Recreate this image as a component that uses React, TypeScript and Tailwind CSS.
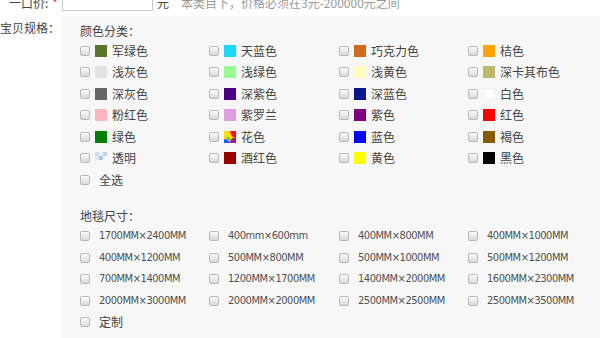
import React from 'react';

type Swatch = { name: string; color?: string; kind?: 'flower' | 'clear' | 'white' };

const colors: Swatch[] = [
  { name: '军绿色', color: '#5b752b' },
  { name: '天蓝色', color: '#1ed6f6' },
  { name: '巧克力色', color: '#d2691e' },
  { name: '桔色', color: '#ffa500' },
  { name: '浅灰色', color: '#e3e3e3' },
  { name: '浅绿色', color: '#98fb98' },
  { name: '浅黄色', color: '#ffffbf' },
  { name: '深卡其布色', color: '#bdb76b' },
  { name: '深灰色', color: '#666666' },
  { name: '深紫色', color: '#4b0082' },
  { name: '深蓝色', color: '#08188c' },
  { name: '白色', kind: 'white' },
  { name: '粉红色', color: '#ffb6c1' },
  { name: '紫罗兰', color: '#dda0dd' },
  { name: '紫色', color: '#800080' },
  { name: '红色', color: '#ff0000' },
  { name: '绿色', color: '#008000' },
  { name: '花色', kind: 'flower' },
  { name: '蓝色', color: '#0000ff' },
  { name: '褐色', color: '#855b00' },
  { name: '透明', kind: 'clear' },
  { name: '酒红色', color: '#990000' },
  { name: '黄色', color: '#ffff00' },
  { name: '黑色', color: '#000000' },
];

const sizes = [
  '1700MM×2400MM',
  '400mm×600mm',
  '400MM×800MM',
  '400MM×1000MM',
  '400MM×1200MM',
  '500MM×800MM',
  '500MM×1000MM',
  '500MM×1200MM',
  '700MM×1400MM',
  '1200MM×1700MM',
  '1400MM×2000MM',
  '1600MM×2300MM',
  '2000MM×3000MM',
  '2000MM×2000MM',
  '2500MM×2500MM',
  '2500MM×3500MM',
];

const Checkbox = () => (
  <span className="block w-[10px] h-[10px] shrink-0 rounded-[2px] border border-[#b9b9b9] bg-linear-to-b from-[#fbfbfb] to-[#d9d9d9]" />
);

const SwatchBox = ({ s }: { s: Swatch }) => {
  if (s.kind === 'flower') {
    return (
      <svg width="12" height="12" viewBox="0 0 12 12" className="shrink-0">
        <rect width="12" height="12" fill="#ffe000" />
        <path d="M6 0h6v7C9 7 7 5 6 0z" fill="#ff1010" />
        <path d="M0 8c3 0 5 1 6 4H0z" fill="#1a5cff" />
        <path d="M6 12c0-3 1-4 3-5h3v5z" fill="#9a1ea0" />
        <path d="M3 6c2 0 3 1 3 3-2 0-3-1-3-3z" fill="#22c04a" />
      </svg>
    );
  }
  if (s.kind === 'clear') {
    return (
      <svg width="12" height="12" viewBox="0 0 12 12" className="shrink-0">
        <rect width="12" height="12" fill="#f4f7fc" />
        <rect x="0" y="0" width="4" height="4" fill="#cfdcf2" />
        <rect x="4" y="0" width="4" height="4" fill="#e6edf8" />
        <rect x="8" y="0" width="4" height="4" fill="#bfd1ee" />
        <rect x="4" y="4" width="4" height="4" fill="#aec4e9" />
        <rect x="0" y="4" width="4" height="4" fill="#e0e8f6" />
      </svg>
    );
  }
  if (s.kind === 'white') {
    return <span className="block w-[12px] h-[12px] shrink-0 bg-white border border-[#eeeeee]" />;
  }
  return <span className="block w-[12px] h-[12px] shrink-0" style={{ backgroundColor: s.color }} />;
};

export default function App() {
  return (
    <div className="w-[600px] h-[338px] overflow-hidden bg-white text-[12px] text-[#444] font-['Noto_Sans_CJK_SC',sans-serif]">
      <div className="-mt-[13px]">
        {/* 一口价 */}
        <div className="flex items-start h-[24px] leading-[16px]">
          <div className="w-[62px] shrink-0 pl-[9px] mt-[8px]">
            一口价:<span className="ml-[4px] text-[#e4393c]">*</span>
          </div>
          <div className="w-[91px] h-[24px] shrink-0 border border-[#c8c8c8] bg-white" />
          <span className="ml-[4px] mt-[8px]">元</span>
          <span className="ml-[12px] mt-[8px] text-[#9a9a9a]">本类目下，价格必须在3元-200000元之间</span>
        </div>

        {/* 宝贝规格 */}
        <div className="flex mt-[5px]">
          <div className="w-[62px] shrink-0 pt-[3px] leading-[18px] whitespace-nowrap">宝贝规格：</div>
          <div className="flex-1 bg-[#f7f7f7] pl-[18px] pt-[6px] h-[360px]">
            <div className="leading-[18px]">颜色分类：</div>
            <div className="grid grid-cols-[129px_130px_129px_129px]">
              {colors.map((c) => (
                <div key={c.name} className="flex items-center h-[21.5px] whitespace-nowrap">
                  <Checkbox />
                  <span className="ml-[5px]"><SwatchBox s={c} /></span>
                  <span className="ml-[5px]">{c.name}</span>
                </div>
              ))}
              <div className="flex items-center h-[21.5px]">
                <Checkbox />
                <span className="ml-[9px]">全选</span>
              </div>
            </div>

            <div className="mt-[16px] leading-[18px]">地毯尺寸：</div>
            <div className="grid grid-cols-[129px_130px_129px_129px] mt-[1px]">
              {sizes.map((s) => (
                <div key={s} className="flex items-center h-[21.5px] whitespace-nowrap">
                  <Checkbox />
                  <span className="ml-[9px] text-[11px] tracking-[-0.45px] text-[#505050] font-['DejaVu_Sans_Condensed','DejaVu_Sans','Noto_Sans_CJK_SC',sans-serif] [font-stretch:condensed]">
                    {s}
                  </span>
                </div>
              ))}
              <div className="flex items-center h-[21.5px]">
                <Checkbox />
                <span className="ml-[9px]">定制</span>
              </div>
            </div>
          </div>
        </div>
      </div>
    </div>
  );
}
